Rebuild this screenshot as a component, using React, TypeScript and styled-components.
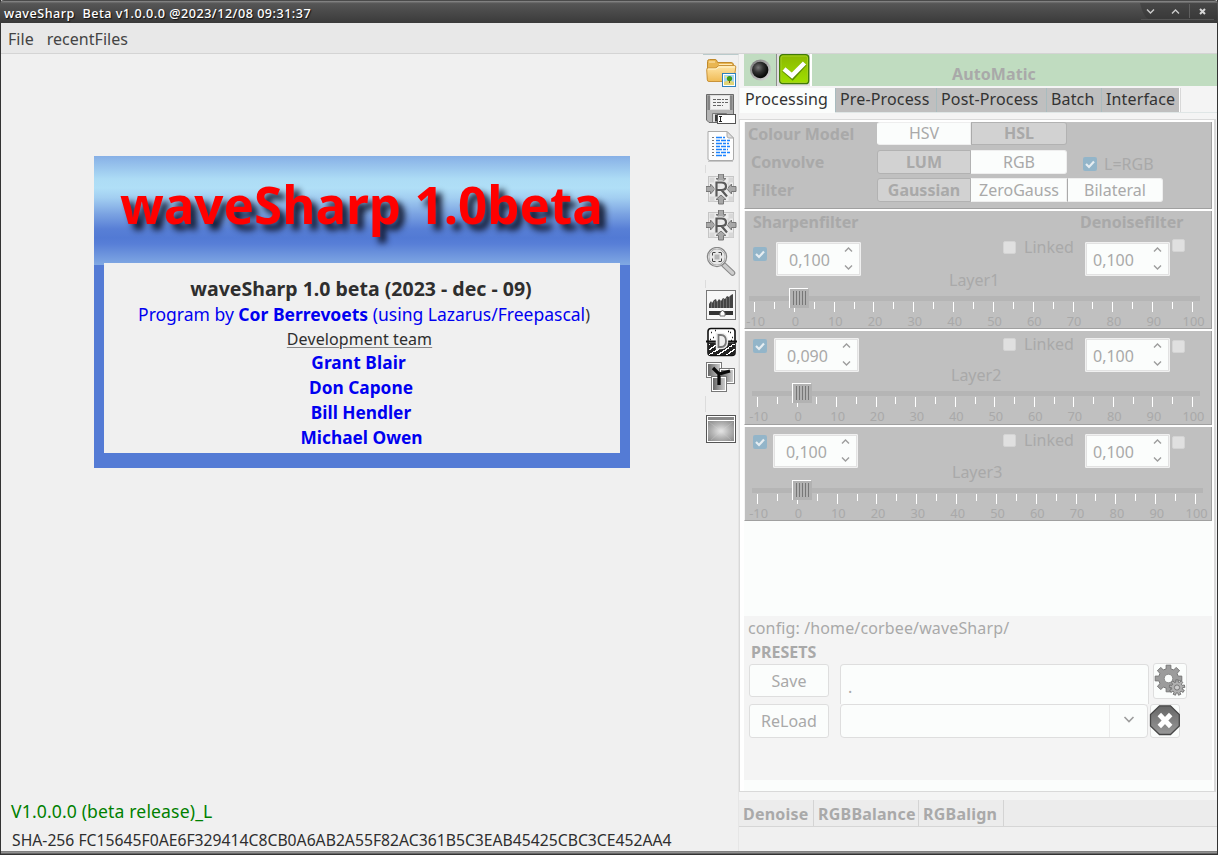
import React from 'react';
import styled, { createGlobalStyle, css } from 'styled-components';

const Global = createGlobalStyle`
  *, *::before, *::after { box-sizing: border-box; }
  body { margin: 0; font-family: "Noto Sans", "Open Sans", sans-serif; font-size: 16px; color: #333; overflow: hidden; }
  svg { display: block; flex: none; }
`;

const Window = styled.div`
  width: 1218px; height: 855px; display: flex; flex-direction: column;
  background: #f0f0f0; border-left: 1px solid #333; border-right: 1px solid #333;
`;

const TitleBar = styled.header`
  height: 23px; flex: none; margin: 0 -1px; padding: 2px 0 0 4px;
  display: flex; justify-content: space-between;
  border-radius: 4px 4px 0 0;
  border-top: 1px solid #4a4a4a;
  background: linear-gradient(#8a8a8a 0, #777 1px, #5c5c5c 2px, #555 3px, #3a3a3a 100%);
`;
const Caption = styled.div`
  font-size: 12.6px; line-height: 21px; font-weight: 500; color: #fff; white-space: pre;
  text-shadow: 1px 1px 1px #111; letter-spacing: 0.5px;
`;
const MenuBar = styled.nav`
  height: 31px; flex: none; display: flex; gap: 13px; padding: 0 7px;
  background: #e8e8e8; border-bottom: 1px solid #d4d4d4; line-height: 32px; color: #444; letter-spacing: 0.03px;
`;
const Body = styled.main`flex: 1; display: flex; min-height: 0;`;
const BottomEdge = styled.div`
  height: 4px; flex: none; background: linear-gradient(#777, #999 2px, #333 3px);
`;

/* ---- left side ---- */
const Stage = styled.section`width: 702px; flex: none; display: flex; flex-direction: column; padding-left: 10px;`;
const About = styled.div`
  margin: 102px 0 0 83px; width: 536px; height: 312px; background: #547bd5; flex: none;
`;
const Banner = styled.div`
  height: 109px; padding: 10px 0 0 26px;
  background: linear-gradient(#87b0e6 0, #addcf5 23px, #b0dff7 32px, #a2cef1 42px, #7ba3e2 58px, #587fd6 73px, #527ad4 82px, #587fd7 88px, #81a9e3 109px);
`;
const BannerTitle = styled.h1`
  margin: 0; font-size: 51.1px; line-height: 76px; font-weight: 700; color: #f00; white-space: nowrap;
  text-shadow: 6px 6px 6px rgba(15, 20, 40, 0.95);
`;
const Credits = styled.div`
  margin: -2px 10px 0; height: 190px; background: #f0f0f0; padding-top: 13px;
  display: flex; flex-direction: column; align-items: center; position: relative;
`;
const Line = styled.div<{ $size: number; $blue?: boolean; $bold?: boolean; $h?: number; $lh?: number; $shift?: number; $indent?: number; $ls?: number }>`
  font-size: ${p => p.$size}px; line-height: ${p => p.$lh ?? p.$h ?? 25}px; height: ${p => p.$h ?? 25}px; white-space: nowrap;
  color: ${p => (p.$blue ? '#0000f0' : '#2e2e2e')}; font-weight: ${p => (p.$bold ? 700 : 400)};
  padding: 0 ${p => p.$shift ?? 0}px 0 ${p => p.$indent ?? 0}px; letter-spacing: ${p => p.$ls ?? 0}px;
`;
const Paren = styled.span`color: #333; font-size: 16px;`;
const Under = styled.span`text-decoration: underline; text-decoration-color: #888; text-underline-offset: 2px;`;
const Version = styled.div`margin-top: auto; font-size: 17.6px; line-height: 28px; letter-spacing: 0.13px; color: #008000;`;
const Hash = styled.div`
  font-size: 15.73px; line-height: 30px; height: 26px; padding-left: 1px; color: #2e2e2e; white-space: nowrap;
`;

/* ---- tool column ---- */
const Tools = styled.aside`
  width: 36px; flex: none; display: flex; flex-direction: column; align-items: flex-start; padding: 0 0 0 2px;
  border-right: 1px solid #e6e6e6; border-top: 1px solid #b9cacb;
`;
const Tool = styled.div<{ $top: number }>`margin-top: ${p => p.$top}px; width: 32px; height: 32px; padding-left: 1px;`;
const ToolDivider = styled.div<{ $top: number; $h: number }>`
  width: 1px; height: ${p => p.$h}px; margin-top: ${p => p.$top}px; background: #dcdcdc;
`;

/* ---- right side ---- */
const Side = styled.section`width: 478px; flex: none; display: flex; flex-direction: column; background: #f4f4f4;`;
const AutoBar = styled.div`
  height: 32px; flex: none; margin-left: 5px; background: #c0dcc0; display: flex;
  color: #a9a9a9; font-weight: 700;
`;
const Led = styled.div`padding: 5px 0 0 6px; width: 32px;`;
const CheckButton = styled.div`
  width: 36px; height: 32px; background: #dedede; border-left: 1px solid #8d8d8d; border-right: 2px solid #fff;
  padding-left: 2px;
`;
const AutoLabel = styled.div`padding-left: 140px; line-height: 41px; letter-spacing: 0.1px;`;
const TabRow = styled.div`
  display: flex; height: 25px; flex: none; margin: 2px 0 0 1px; border-bottom: 1px solid #dfe6e6;
`;
const Tab = styled.div<{ $w: number; $active?: boolean }>`
  width: ${p => p.$w}px; height: ${p => (p.$active ? 25 : 24)}px; line-height: 23px; padding-left: 5px; color: #333; white-space: nowrap;
  letter-spacing: 0.15px;
  background: ${p => (p.$active ? '#fbfdfc' : '#bfbfbf')};
  ${p => !p.$active && css`border-left: 1px solid #a9bcbf; padding-left: 4px;`}
`;
const TabEnd = styled.div`width: 2px; background: #fff; border-right: 1px solid #d8d8d8;`;
const Page = styled.div`
  height: 673px; flex: none; margin-top: 6px; border: 1px solid #d9d9d9; border-right-width: 2px;
  background: #fff; padding: 2px 3px 0 4px; margin-right: 1px;
`;
const PageFill = styled.div`background: #fbfdfc; width: 468px; height: 669px;`;
const Group = styled.div<{ $h: number }>`
  height: ${p => p.$h}px; width: 468px; background: #c0c0c0; color: #a9a9a9;
  border-right: 1px solid #a0a0a0; border-bottom: 1px solid #a0a0a0; border-left: 1px solid #f4f4f4;
`;
const Gap = styled.div`height: 2px; background: #fff;`;
const OptionRow = styled.div<{ $top?: number; $indent: number }>`
  display: flex; height: 24px; padding-left: ${p => p.$indent}px; margin-top: ${p => p.$top ?? 0}px;
`;
const OptionName = styled.div<{ $w: number }>`width: ${p => p.$w}px; font-weight: 700; line-height: 24px;`;
const Segment = styled.div<{ $on?: boolean; $w: number; $first?: boolean; $last?: boolean; $line?: boolean; $raise?: boolean }>`
  width: ${p => p.$w}px; height: ${p => (p.$raise ? 23 : 24)}px; line-height: ${p => (p.$raise ? 20 : 22)}px;
  text-align: center; white-space: nowrap;
  background: ${p => (p.$on ? '#d2d2d2' : '#fbfdfc')}; font-weight: ${p => (p.$on ? 700 : 400)};
  border: 1px solid ${p => (p.$on ? '#b2b2b2' : '#eeeeee')};
  border-left-color: ${p => (p.$line ? '#aaa' : p.$on ? '#b2b2b2' : '#fbfdfc')};
  border-radius: ${p => (p.$first ? '3px 0 0 3px' : p.$last ? '0 3px 3px 0' : '0')};
`;
const Box = styled.div<{ $mt: number; $ml: number }>`
  width: 13px; height: 13px; flex: none; margin: ${p => p.$mt}px 0 0 ${p => p.$ml}px;
  background: #e0e0e0; border-radius: 2px; border: 1px solid #d4d4d4;
`;
const Checked = styled.div<{ $mt: number; $ml: number }>`
  width: 14px; height: 14px; flex: none; margin: ${p => p.$mt}px 0 0 ${p => p.$ml}px;
  background: #93b5c9; border-radius: 2px;
`;
const Word = styled.div<{ $mt: number; $ml: number; $w?: number; $bold?: boolean }>`
  margin: ${p => p.$mt}px 0 0 ${p => p.$ml}px; width: ${p => (p.$w ? p.$w + 'px' : 'auto')}; flex: none;
  line-height: 22px; height: 22px; white-space: nowrap; font-weight: ${p => (p.$bold ? 700 : 400)};
`;
const Row = styled.div<{ $h: number }>`display: flex; height: ${p => p.$h}px; align-items: flex-start;`;
const SpinBox = styled.div<{ $mt: number; $ml: number; $pad: number }>`
  width: 85px; height: 34px; flex: none; margin: ${p => p.$mt}px 0 0 ${p => p.$ml}px;
  background: #fbfdfc; border: 1px solid #f0f0f0; box-shadow: inset 0 0 0 1px #e2e2e2; border-radius: 1px;
  padding: 0 6px 0 ${p => p.$pad}px; line-height: 34px; display: flex; justify-content: space-between;
`;
const ScaleLabels = styled.div<{ $step: number; $start: number }>`
  display: flex; margin-left: ${p => p.$start - p.$step / 2}px; height: 16px; overflow: visible;
`;
const ScaleLabel = styled.div<{ $step: number }>`
  width: ${p => p.$step}px; flex: none; text-align: center; font-size: 12.8px; line-height: 17px;
`;
const Blank = styled.div`height: 95px;`;
const Presets = styled.div`height: 164px; background: #f4f4f4; color: #a9a9a9; padding-left: 5px;`;
const Config = styled.div`line-height: 24px; height: 25px; margin-left: -1px; letter-spacing: 0.13px;`;
const PresetTitle = styled.div`line-height: 23px; height: 23px; padding-left: 2px; font-weight: 700; font-size: 16px;`;
const PresetRow = styled.div<{ $h: number }>`display: flex; height: ${p => p.$h}px;`;
const Button = styled.div<{ $h: number }>`
  width: 80px; height: ${p => p.$h}px; border: 1px solid #dedede; border-radius: 3px; background: #fbfdfc;
  line-height: 33px; text-align: center; flex: none;
`;
const Field = styled.div`
  width: 309px; height: 40px; margin-left: 11px; border: 1px solid #dedede; border-bottom: 0; border-radius: 4px 4px 0 0;
  background: #fbfdfc; line-height: 44px; padding-left: 7px;
`;
const Combo = styled.div`
  width: 308px; height: 34px; margin-left: 11px; border: 1px solid #dedede; border-radius: 4px;
  background: #fbfdfc; display: flex; justify-content: flex-end;
`;
const ComboArrow = styled.div`width: 38px; border-left: 1px solid #ebebeb; padding: 10px 0 0 13px;`;
const IconButton = styled.div<{ $w: number; $h: number; $ml: number; $mt: number }>`
  width: ${p => p.$w}px; height: ${p => p.$h}px; margin: ${p => p.$mt}px 0 0 ${p => p.$ml}px;
  background: #fbfdfc; border: 1px solid #dedede; border-radius: 3px;
`;
const BottomTabs = styled.div`
  height: 27px; margin-top: 8px; display: flex; flex: none; background: #ececec; border-bottom: 1px solid #d6d6d6;
  font-weight: 700; color: #a9a9a9; line-height: 28px; letter-spacing: 0.22px;
`;
const BottomTab = styled.div<{ $w: number }>`
  width: ${p => p.$w}px; padding-left: 4px; border-right: 1px solid #d4d4d4; white-space: nowrap;
`;
const SideRest = styled.div`flex: 1; background: #f0f0f0;`;

/* ---- drawings ---- */
const WindowButtons = () => (
  <svg width="98" height="20" viewBox="1120 3 98 20" fill="none">
    <path d="M1140 3H1217V19Q1217 20 1215 20H1152Q1144 20 1140 3Z" fill="#303030" opacity=".4" />
    <path d="M1189.5 4V18" stroke="#606060" />
    <path d="M1141 19.5H1214" stroke="#555" />
    <path d="M1147 9.5L1150.5 13L1154 9.5M1172 13.5L1175.5 10L1179 13.5" stroke="#ccc" strokeWidth="1.4" />
    <path d="M1200 9L1205 14M1205 9L1200 14" stroke="#d6d6d6" strokeWidth="2" />
  </svg>
);

const Tick = () => (
  <svg width="14" height="14" fill="none">
    <path d="M3 7L6 10L11 4.5" stroke="#e6edf1" strokeWidth="2.2" />
  </svg>
);

const SpinArrows = () => (
  <svg width="10" height="32" fill="none" stroke="#9d9d9d" strokeWidth="1.4">
    <path d="M1 8.5L4.5 5L8 8.5M1 22.5L4.5 26L8 22.5" />
  </svg>
);

const FolderIcon = () => (
  <svg width="32" height="32">
    <defs>
      <linearGradient id="fold" x2="0" y2="1"><stop stopColor="#ffe6a8" /><stop offset="1" stopColor="#f0bb55" /></linearGradient>
    </defs>
    <path d="M1.5 22V4.5Q1.5 2.5 3.5 2.5H9Q10.5 2.5 11 4L11.5 5.5H25Q27.5 5.5 27.5 8V24Z" fill="#e9b652" stroke="#c08a2c" />
    <path d="M3 5H9M13 7.5H26" stroke="#ffe9b5" />
    <path d="M3 24.5Q1.5 24.5 1.3 23L.7 12.5Q.6 11 2 11H9Q10 11 11 10L12 9Q12.5 8.5 14 8.5H28Q30 8.5 29.8 10L28 23Q27.5 24.5 26 24.5Z" fill="url(#fold)" stroke="#c9933a" />
    <path d="M2 12H10L13 10H29" stroke="#fff3cd" fill="none" />
    <rect x="16.5" y="16.5" width="13" height="13" fill="#fff" stroke="#2f80bd" />
    <rect x="18" y="18" width="10" height="10" fill="#a5d4ef" />
    <path d="M18 28V25Q23 22 28 25V28Z" fill="#e1d477" />
    <path d="M23.5 26V22" stroke="#875016" /><circle cx="23.5" cy="21.5" r="2.6" fill="#3f9a18" /><circle cx="20" cy="20" r="1" fill="#fff068" />
  </svg>
);

const FloppyIcon = () => (
  <svg width="32" height="32">
    <path d="M.5 .5H27.5V28.5H3L.5 26Z" fill="#b4b4b4" stroke="#6a6a6a" />
    <path d="M1.5 1.5H4V16H1.5ZM24 1.5H26.5V16H24Z" fill="#858585" />
    <rect x="4.5" y="1.5" width="19" height="14" fill="#f2f2f2" stroke="#ddd" />
    <path d="M7 5.5H22M7 8.5H22M7 11.5H17" stroke="#666" strokeDasharray="3 1 4 1 2 1" />
    <path d="M6.5 28V19.5H20.5V28" fill="#dedede" stroke="#777" />
    <rect x="9" y="20.5" width="4" height="7" fill="#383838" />
    <rect x="11.5" y="20.5" width="18" height="9" fill="#fff" stroke="#555" />
    <path d="M13 22.5H16M14.5 22.5V27.5M13 27.5H16" stroke="#222" />
  </svg>
);

const DocIcon = () => (
  <svg width="32" height="32">
    <path d="M2 .5H21L27.5 7V28Q27.5 29.5 26 29.5H4Q2 29.5 2 28Z" fill="#fdfdfd" stroke="#aaa" />
    <path d="M2 30.5H27" stroke="#c7c7c7" />
    <path d="M21 .5V5Q21 7 23 7H27.5Z" fill="#ddd" stroke="#aaa" />
    {[6.5, 9.5, 12.5, 15.5, 18.5, 21.5, 24.5].map((y, i) => (
      <g key={y}>
        <path d={`M6 ${y}H8`} stroke="#777" />
        <path d={`M10 ${y}H${[19, 24, 23, 24, 22, 24, 20][i]}`} stroke="#1b83ff" strokeWidth="1.4" strokeDasharray={i % 2 ? '4 1 5 1' : '6 1 3 1'} />
      </g>
    ))}
  </svg>
);

const arrow = 'M13 .5H18V5H20.5L15.5 9.5L10.5 5H13Z';
const ResizeIcon = () => (
  <svg width="32" height="32" viewBox="0.5 0.5 32 32">
    <rect x="3" y="3" width="25" height="25" fill="#ececec" stroke="#c5c5c5" />
    <path d="M4 4H9V9H4ZM9 9H14V14H9ZM19 9H24V14H19ZM23 4H28V9H23ZM4 23H9V28H4ZM23 23H28V28H23ZM9 19H14V24H9Z" fill="#d8d8d8" />
    {[0, 90, 180, 270].map(a => (
      <path key={a} d={arrow} transform={`rotate(${a} 15.5 15.5)`} fill="#a8a8a8" stroke="#777" />
    ))}
    <path d="M11 23V9H16Q20.5 9 20.5 13Q20.5 16.5 16 16.5H11M16 16.5L21.5 23" fill="none" stroke="#eee" strokeWidth="4" />
    <path d="M11 23V9H16Q20.5 9 20.5 13Q20.5 16.5 16 16.5H11M16 16.5L21.5 23" fill="none" stroke="#5a5a5a" strokeWidth="2.2" />
  </svg>
);

const ZoomIcon = () => (
  <svg width="32" height="32" fill="none">
    <path d="M18 18L26.5 26" stroke="#888" strokeWidth="5.5" strokeLinecap="round" />
    <path d="M18 18L26.5 26" stroke="#cdcdcd" strokeWidth="3.5" strokeLinecap="round" />
    <circle cx="11" cy="10" r="9" fill="#e8e8e8" stroke="#888" strokeWidth="2.4" />
    <circle cx="11" cy="10" r="8.6" stroke="#d8d8d8" />
    <path d="M6.5 8.5V6Q6.5 5.5 7 5.5H9.5M12.5 5.5H15Q15.5 5.5 15.5 6V8.5M15.5 11.5V14Q15.5 14.5 15 14.5H12.5M9.5 14.5H7Q6.5 14.5 6.5 14V11.5" stroke="#444" />
    <rect x="8.5" y="7.5" width="5" height="5" fill="#b5b5b5" />
  </svg>
);

const HistogramIcon = () => (
  <svg width="32" height="32">
    <rect x=".5" y=".5" width="29" height="29" fill="#f7f7f7" stroke="#777" />
    <path d="M3 18V14L5 11L6 13L8 10L10 9L11 12L13 9L15 11L17 8L19 9L21 6L23 7L25 5L27 4V18Z" fill="#444" />
    <path d="M5.5 13V18M8.5 11V18M11.5 12V18M14.5 11V18M17.5 9V18M20.5 8V18M23.5 7V18" stroke="#777" strokeWidth=".8" />
    <rect x="3" y="21" width="24" height="4" fill="#333" />
    <path d="M16.5 20L19 23V26H14V23Z" fill="#fff" stroke="#777" />
  </svg>
);

const noise = Array.from({ length: 60 }, (_, i) => [3 + ((i * 7) % 25), 17 + ((i * 5 + (i % 4)) % 11)]);
const DitherIcon = () => (
  <svg width="32" height="32">
    <rect x="2" y="1.5" width="27" height="27" rx="3" fill="#fff" stroke="#111" strokeWidth="1.6" />
    <path d="M2 15.5H29V26Q29 28 27 28H4Q2 28 2 26Z" fill="#222" />
    {noise.map(([x, y], i) => <path key={i} d={`M${x} ${y + .5}h${1 + (i % 2)}`} stroke="#fff" />)}
    <path d="M5 5.5h1M9 3.5h1M7 10.5h1M4 12.5h1M24 5.5h1M26 10.5h1M22 4.5h1M25 13.5h1" stroke="#222" strokeWidth="1.3" />
    <path d="M0 14.5H31" stroke="#111" strokeWidth="2" />
    <path d="M12 8V20H15Q20 20 20 14Q20 8 15 8Z" fill="#eee" stroke="#ececec" strokeWidth="4.5" />
    <path d="M12.5 8V20H15Q20 20 20 14Q20 8 15 8Z" fill="#eee" stroke="#777" strokeWidth="1.8" />
  </svg>
);

const MergeIcon = () => (
  <svg width="32" height="32">
    <defs><linearGradient id="tile"><stop stopColor="#666" /><stop offset="1" stopColor="#ccc" /></linearGradient></defs>
    {[[1, 1], [14, 7], [6, 15]].map(([x, y]) => (
      <g key={x}>
        <rect x={x - .5} y={y - .5} width="15" height="15" fill="#fff" stroke="#777" />
        <rect x={x + 1} y={y + 1} width="12" height="12" fill="url(#tile)" />
      </g>
    ))}
    <path d="M7 6L13 12L24 9M13 12V23" fill="none" stroke="#0a0a0a" strokeWidth="3.3" />
  </svg>
);

const SkyIcon = () => (
  <svg width="32" height="32">
    <defs><radialGradient id="sky" r=".7"><stop stopColor="#e6e6e6" /><stop offset=".5" stopColor="#b4b4b4" /><stop offset="1" stopColor="#888" /></radialGradient></defs>
    <rect x=".5" y=".5" width="29" height="27" fill="#fff" stroke="#555" />
    <rect x="2" y="2" width="26" height="3" fill="#888" />
    <rect x="2" y="6" width="26" height="20" fill="url(#sky)" />
    <path d="M3 7L15 16L27 7M15 16L5 25M15 16L25 25" stroke="#ddd" opacity=".25" fill="none" />
  </svg>
);

const LedIcon = () => (
  <svg width="22" height="22">
    <defs>
      <radialGradient id="led" cx=".38" cy=".35" r=".6"><stop stopColor="#777" /><stop offset=".5" stopColor="#333" /><stop offset="1" stopColor="#0a0a0a" /></radialGradient>
      <linearGradient id="ring" x2="1" y2="1"><stop stopColor="#777" /><stop offset="1" stopColor="#ddd" /></linearGradient>
    </defs>
    <circle cx="10.5" cy="11" r="10.5" fill="url(#ring)" />
    <circle cx="10.2" cy="11" r="8.2" fill="url(#led)" />
  </svg>
);

const GreenCheck = () => (
  <svg width="31" height="32">
    <defs><linearGradient id="green" x2="0" y2="1"><stop stopColor="#8bb800" /><stop offset="1" stopColor="#9fe000" /></linearGradient></defs>
    <rect x=".7" y=".7" width="29" height="29" rx="3" fill="url(#green)" stroke="#3f7a06" strokeWidth="1.3" />
    <rect x="2" y="2" width="26.5" height="26.5" rx="2" fill="none" stroke="#a4cf20" />
    <path d="M5 15.5L13.5 23L25.5 9.5" fill="none" stroke="#5c8c00" strokeWidth="5.5" />
    <path d="M5 15L13 21.7L25.5 9" fill="none" stroke="#fff" strokeWidth="4.6" />
  </svg>
);

const gear = (n: number, r1: number, r2: number) => {
  const pts: string[] = [];
  for (let i = 0; i < n; i++) {
    const a = (i * 2 * Math.PI) / n;
    const w = Math.PI / n;
    ([[r1, -w * .6], [r2, -w * .45], [r2, w * .45], [r1, w * .6]] as number[][]).forEach(([r, d]) =>
      pts.push(`${(r * Math.sin(a + d)).toFixed(1)} ${(-r * Math.cos(a + d)).toFixed(1)}`));
  }
  return 'M' + pts.join('L') + 'Z';
};
const GearsIcon = () => (
  <svg width="32" height="33">
    <g transform="translate(14.5 14.5)">
      <path d={gear(8, 10, 13.5)} fill="#9c9c9c" stroke="#777" /><circle r="4.3" fill="#fbfdfc" stroke="#8a8a8a" />
    </g>
    <g transform="translate(23 23.5)">
      <path d={gear(9, 5.5, 7.8)} fill="#b0b0b0" stroke="#777" /><circle r="2.6" fill="#ccc" stroke="#777" />
    </g>
  </svg>
);
const CloseIcon = () => (
  <svg width="31" height="32" viewBox="1.5 0 31 32" overflow="visible">
    <defs><linearGradient id="oct" x2="0" y2="1"><stop stopColor="#666" /><stop offset="1" stopColor="#999" /></linearGradient></defs>
    <path d="M10 .8H21L29.8 9.5V21L21 29.5H10L1 21V9.5Z" fill="url(#oct)" stroke="#474747" strokeWidth="1.3" />
    <path d="M9.8 9.5L21.2 21.5M21.2 9.5L9.8 21.5" stroke="#fff" strokeWidth="4.8" />
  </svg>
);

type SliderProps = { trackStart: number; trackEnd: number; tickStart: number; tickEnd: number; knob: number };
const Slider = ({ trackStart, trackEnd, tickStart, tickEnd, knob }: SliderProps) => {
  const step = (tickEnd - tickStart) / 22;
  return (
    <>
      <svg width="466" height="25" shapeRendering="crispEdges">
        <rect x={trackStart} y="8" width={trackEnd - trackStart} height="5" fill="#b5b5b5" />
        {Array.from({ length: 23 }, (_, i) => (
          <rect key={i} x={Math.round(tickStart + i * step)} y="14" width="1" height={i % 2 ? 7 : 10} fill="#fff" />
        ))}
        <rect x={knob} y="0" width="19" height="20" fill="#fff" />
        <rect x={knob + 1} y="1" width="19" height="19" fill="#b2b2b2" />
        {[4, 7, 10, 13, 16].map(x => <rect key={x} x={knob + x} y="3" width="1" height="14" fill="#777" />)}
      </svg>
      <ScaleLabels $step={step * 2} $start={tickStart + 1.6}>
        {Array.from({ length: 12 }, (_, i) => <ScaleLabel $step={step * 2} key={i}>{i * 10 - 10}</ScaleLabel>)}
      </ScaleLabels>
    </>
  );
};

type LayerProps = SliderProps & {
  name: string; value: string; spinX: number; nameX: number; top: number; boxTop: number;
  nameTop: number; rowH: number; checkTop: number; linkTop: number;
};
const LayerRow = (p: LayerProps) => (
  <>
    <Row $h={p.rowH}>
      <Checked $mt={p.checkTop} $ml={8}><Tick /></Checked>
      <SpinBox $mt={p.top} $ml={p.spinX - 22} $pad={12}>{p.value}<SpinArrows /></SpinBox>
      <Word $mt={p.nameTop} $ml={p.nameX - p.spinX - 85} $w={258 - p.nameX}>{p.name}</Word>
      <Box $mt={p.linkTop} $ml={0} />
      <Word $mt={p.linkTop - 5} $ml={8} $w={61}>Linked</Word>
      <SpinBox $mt={p.top} $ml={0} $pad={7}>0,100<SpinArrows /></SpinBox>
      <Box $mt={p.boxTop} $ml={2} />
    </Row>
    <Slider {...p} />
  </>
);

export default function App() {
  return (
    <>
      <Global />
      <Window>
        <TitleBar>
          <Caption>{'waveSharp  Beta v1.0.0.0 @2023/12/08 09:31:37'}</Caption>
          <WindowButtons />
        </TitleBar>
        <MenuBar><span>File</span><span>recentFiles</span></MenuBar>
        <Body>
          <Stage>
            <About>
              <Banner><BannerTitle>waveSharp 1.0beta</BannerTitle></Banner>
              <Credits>
                <Line $size={19.5} $bold $h={26} $shift={2}>waveSharp 1.0 beta (2023 - dec - 09)</Line>
                <Line $size={17.5} $blue $h={24} $indent={4}>Program by <b>Cor Berrevoets</b> (using Lazarus/Freepascal<Paren>)</Paren></Line>
                <Line $size={16} $h={24} $lh={26} $shift={5} $ls={0.1}><Under>Development team</Under></Line>
                <Line $size={17.3} $blue $bold $shift={7} $ls={0.1}>Grant Blair</Line>
                <Line $size={17.3} $blue $bold $shift={2}>Don Capone</Line>
                <Line $size={17.3} $blue $bold $shift={2}>Bill Hendler</Line>
                <Line $size={17.3} $blue $bold $shift={1}>Michael Owen</Line>
              </Credits>
            </About>
            <Version>V1.0.0.0 (beta release)_L</Version>
            <Hash>SHA-256 FC15645F0AE6F329414C8CB0A6AB2A55F82AC361B5C3EAB45425CBC3CE452AA4</Hash>
          </Stage>
          <Tools>
            <Tool $top={2}><FolderIcon /></Tool>
            <Tool $top={5}><FloppyIcon /></Tool>
            <Tool $top={5}><DocIcon /></Tool>
            <ToolDivider $top={2} $h={8} />
            <Tool $top={1}><ResizeIcon /></Tool>
            <Tool $top={4}><ResizeIcon /></Tool>
            <Tool $top={5}><ZoomIcon /></Tool>
            <ToolDivider $top={1} $h={8} />
            <Tool $top={2}><HistogramIcon /></Tool>
            <Tool $top={5}><DitherIcon /></Tool>
            <Tool $top={3}><MergeIcon /></Tool>
            <ToolDivider $top={2} $h={16} />
            <Tool $top={3}><SkyIcon /></Tool>
          </Tools>
          <Side>
            <AutoBar>
              <Led><LedIcon /></Led>
              <CheckButton><GreenCheck /></CheckButton>
              <AutoLabel>AutoMatic</AutoLabel>
            </AutoBar>
            <TabRow>
              <Tab $w={95} $active>Processing</Tab>
              <Tab $w={101}>Pre-Process</Tab>
              <Tab $w={110}>Post-Process</Tab>
              <Tab $w={55}>Batch</Tab>
              <Tab $w={78}>Interface</Tab>
              <TabEnd />
            </TabRow>
            <Page>
              <PageFill>
                <Group $h={87}>
                  <OptionRow $indent={3}>
                    <OptionName $w={129}>Colour Model</OptionName>
                    <Segment $w={94} $first $raise>HSV</Segment>
                    <Segment $w={96} $on $last $line $raise>HSL</Segment>
                  </OptionRow>
                  <OptionRow $indent={6} $top={4}>
                    <OptionName $w={126}>Convolve</OptionName>
                    <Segment $w={94} $on $first>LUM</Segment>
                    <Segment $w={96} $last>RGB</Segment>
                    <Checked $mt={7} $ml={16}><Tick /></Checked>
                    <Word $mt={3} $ml={7}>L=RGB</Word>
                  </OptionRow>
                  <OptionRow $indent={7} $top={4}>
                    <OptionName $w={125}>Filter</OptionName>
                    <Segment $w={94} $on $first>Gaussian</Segment>
                    <Segment $w={96}>ZeroGauss</Segment>
                    <Segment $w={96} $last $line>Bilateral</Segment>
                  </OptionRow>
                </Group>
                <Gap />
                <Group $h={118}>
                  <Row $h={22}>
                    <Word $mt={0} $ml={8} $w={327} $bold>Sharpenfilter</Word>
                    <Word $mt={0} $ml={0} $bold>Denoisefilter</Word>
                  </Row>
                  <LayerRow name="Layer1" value="0,100" spinX={31} nameX={204} top={9} boxTop={6} nameTop={36} rowH={55} checkTop={14} linkTop={8}
                    trackStart={4} trackEnd={455} tickStart={9} tickEnd={447} knob={44} />
                </Group>
                <Gap />
                <Group $h={94}>
                  <LayerRow name="Layer2" value="0,090" spinX={29} nameX={206} top={7} boxTop={9} nameTop={33} rowH={52} checkTop={8} linkTop={7}
                    trackStart={7} trackEnd={455} tickStart={12} tickEnd={447} knob={47} />
                </Group>
                <Gap />
                <Group $h={94}>
                  <LayerRow name="Layer3" value="0,100" spinX={28} nameX={207} top={7} boxTop={9} nameTop={34} rowH={53} checkTop={8} linkTop={7}
                    trackStart={7} trackEnd={458} tickStart={12} tickEnd={450} knob={47} />
                </Group>
                <Blank />
                <Presets>
                  <Config>config: /home/corbee/waveSharp/</Config>
                  <PresetTitle>PRESETS</PresetTitle>
                  <PresetRow $h={40}>
                    <Button $h={33}>Save</Button>
                    <Field>.</Field>
                    <IconButton $w={34} $h={36} $ml={4} $mt={-1}><GearsIcon /></IconButton>
                  </PresetRow>
                  <PresetRow $h={35}>
                    <Button $h={34}>ReLoad</Button>
                    <Combo><ComboArrow><svg width="12" height="10" fill="none" stroke="#9d9d9d" strokeWidth="1.6"><path d="M1.5 2L6 6.5L10.5 2" /></svg></ComboArrow></Combo>
                    <IconButton $w={30} $h={34} $ml={2} $mt={0}><CloseIcon /></IconButton>
                  </PresetRow>
                </Presets>
              </PageFill>
            </Page>
            <BottomTabs>
              <BottomTab $w={75}>Denoise</BottomTab>
              <BottomTab $w={105}>RGBBalance</BottomTab>
              <BottomTab $w={85}>RGBalign</BottomTab>
            </BottomTabs>
            <SideRest />
          </Side>
        </Body>
        <BottomEdge />
      </Window>
    </>
  );
}
